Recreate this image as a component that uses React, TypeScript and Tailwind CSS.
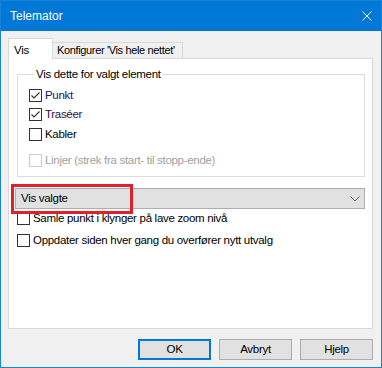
import { useState } from 'react';

function Check({ checked, disabled }: { checked?: boolean; disabled?: boolean }) {
  return (
    <span
      className={`flex h-[13px] w-[13px] shrink-0 items-center justify-center border bg-white ${
        disabled ? 'border-[#cccccc]' : 'border-[#333333]'
      }`}
    >
      {checked && (
        <svg width="11" height="11" viewBox="0 0 11 11">
          <path d="M1.5 5.5 L4 8 L9.5 2.5" fill="none" stroke="#333333" strokeWidth="1.1" />
        </svg>
      )}
    </span>
  );
}

function Row({ label, checked, disabled, color }: { label: string; checked?: boolean; disabled?: boolean; color?: string }) {
  return (
    <div className="flex h-[13px] items-center gap-[3px]">
      <Check checked={checked} disabled={disabled} />
      <span className={`whitespace-nowrap leading-none ${disabled ? 'text-[#a0a0a0]' : color ?? 'text-black'}`}>{label}</span>
    </div>
  );
}

function Btn({ label, primary }: { label: string; primary?: boolean }) {
  return (
    <button
      className={`flex h-[21px] w-[73px] items-center justify-center bg-[#e1e1e1] leading-none text-black ${
        primary ? 'border-2 border-[#0078d7]' : 'border border-[#adadad]'
      }`}
    >
      {label}
    </button>
  );
}

export default function App() {
  const [tab] = useState('vis');

  return (
    <div className="flex h-[368px] w-[382px] flex-col border border-[#1883d7] bg-[#f0f0f0] font-['Liberation_Sans',Arial,sans-serif] text-[11.5px] tracking-[-0.3px] text-black">
      {/* title bar */}
      <div className="flex h-[30px] shrink-0 items-center justify-between bg-[#0078d7] pl-[9px] pr-[9px] text-[12px] tracking-normal text-white">
        <span>Telemator</span>
        <svg width="10" height="10" viewBox="0 0 10 10">
          <path d="M0.5 0.5 L9.5 9.5 M9.5 0.5 L0.5 9.5" stroke="#ffffff" strokeWidth="1" />
        </svg>
      </div>

      <div className="flex flex-1 flex-col px-[7px] pt-[7px]">
        {/* tabs */}
        <div className="flex h-[20px] items-end">
          <div className="relative z-10 -mb-px flex h-[21px] w-[45px] items-start border border-b-0 border-[#d9d9d9] bg-white pl-[5px] pt-[3px]">
            {tab === 'vis' && 'Vis'}
          </div>
          <div className="flex h-[16px] w-[130px] items-center whitespace-nowrap border border-b-0 border-l-0 border-[#d9d9d9] bg-[#f0f0f0] pl-[4px] text-[11px] tracking-[-0.35px]">
            Konfigurer 'Vis hele nettet'
          </div>
        </div>

        {/* panel */}
        <div className="flex h-[271px] w-[365px] flex-col border border-[#d9d9d9] bg-white pl-[6px] pr-[7px] pt-[8px]">
          <fieldset className="ml-[2px] h-[110px] w-[348px] border border-[#dcdcdc] pl-[11px]">
            <legend className="ml-[5px] px-[2px] leading-[15px]">Vis dette for valgt element</legend>
            <div className="mt-[7px] flex flex-col">
              <Row label="Punkt" checked color="text-[#12126a]" />
              <div className="h-[6px]" />
              <Row label="Traséer" checked color="text-[#2e1038]" />
              <div className="h-[7px]" />
              <Row label="Kabler" />
              <div className="h-[13px]" />
              <Row label="Linjer (strek fra start- til stopp-ende)" disabled />
            </div>
          </fieldset>

          <div className="relative mt-[11px]">
            <div className="flex h-[21px] w-[350px] items-center justify-between border border-[#adadad] bg-[#e1e1e1] pl-[5px] pr-[4px]">
              <span className="leading-none">Vis valgte</span>
              <svg width="10" height="6" viewBox="0 0 10 6">
                <path d="M0.5 0.5 L5 5 L9.5 0.5" fill="none" stroke="#606060" strokeWidth="1" />
              </svg>
            </div>
            <div className="pointer-events-none absolute left-[-4px] top-[-4px] z-10 h-[30px] w-[122px] border-[3px] border-[#e3202a]" />
          </div>

          <div className="ml-[2px] mt-[3px] flex flex-col gap-[9px]">
            <Row label="Samle punkt i klynger på lave zoom nivå" />
            <Row label="Oppdater siden hver gang du overfører nytt utvalg" />
          </div>
        </div>

        {/* buttons */}
        <div className="mt-[10px] flex justify-end gap-[8px] pr-[1px]">
          <Btn label="OK" primary />
          <Btn label="Avbryt" />
          <Btn label="Hjelp" />
        </div>
      </div>
    </div>
  );
}
